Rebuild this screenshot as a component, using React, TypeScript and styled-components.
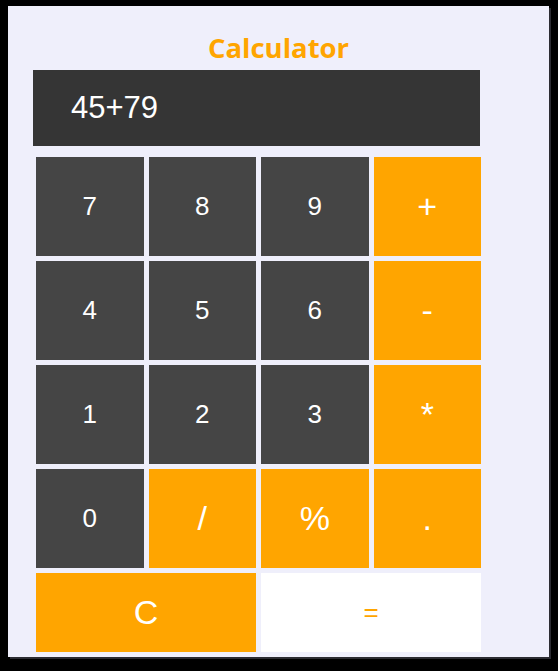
import React, {useState} from "react";
import styled, {createGlobalStyle} from "styled-components";

type Variant = "dark" | "orange" | "white";

interface Key {
  label: string;
  variant: Variant;
  big?: boolean;
  wide?: boolean;
}

const KEYS: Key[] = [
  {label: "7", variant: "dark"},
  {label: "8", variant: "dark"},
  {label: "9", variant: "dark"},
  {label: "+", variant: "orange", big: true},
  {label: "4", variant: "dark"},
  {label: "5", variant: "dark"},
  {label: "6", variant: "dark"},
  {label: "-", variant: "orange", big: true},
  {label: "1", variant: "dark"},
  {label: "2", variant: "dark"},
  {label: "3", variant: "dark"},
  {label: "*", variant: "orange", big: true},
  {label: "0", variant: "dark"},
  {label: "/", variant: "orange", big: true},
  {label: "%", variant: "orange", big: true},
  {label: ".", variant: "orange", big: true},
  {label: "C", variant: "orange", big: true, wide: true},
  {label: "=", variant: "white", wide: true},
];

const COLORS: Record<Variant, { bg: string; fg: string }> = {
  dark: {bg: "#454545", fg: "#ffffff"},
  orange: {bg: "#ffa500", fg: "#ffffff"},
  white: {bg: "#ffffff", fg: "#ffa500"},
};

export default function App() {
  const [value, setValue] = useState("45+79");

  const press = (label: string) => {
    if (label === "C") return setValue("");
    if (label === "=") {
      try {
        // eslint-disable-next-line no-new-func
        setValue(String(Function(`return (${value})`)()));
      } catch {
        setValue("Error");
      }
      return;
    }
    setValue(v => v + label);
  };

  return (
    <>
      <GlobalStyle/>
      <S.Wrapper>
        <S.Title>Calculator</S.Title>
        <S.Body>
          <S.Display>{value}</S.Display>
          <S.Keys>
            {KEYS.map(k => (
              <S.Button key={k.label} $variant={k.variant} $big={k.big} $wide={k.wide}
                        onClick={() => press(k.label)}>
                {k.label}
              </S.Button>
            ))}
          </S.Keys>
        </S.Body>
      </S.Wrapper>
    </>
  );
}

const GlobalStyle = createGlobalStyle`
  html, body {
    margin: 0;
    background: #000000;
  }
  body {
    padding: 6px 0 0 8px;
    min-height: 671px;
    box-sizing: border-box;
  }
`;

const S = {
  Wrapper: styled.div`
    display: flex;
    flex-direction: column;
    width: 541px;
    height: 651px;
    background: #efeffb;
    box-shadow: 2px 2px 0 #2c2c32;
  `,
  Title: styled.h1`
    margin: 27px 0 0;
    font-family: "Open Sans", "Liberation Sans", sans-serif;
    font-weight: 700;
    font-size: 27.5px;
    line-height: 30px;
    text-align: center;
    color: #ffa500;
  `,
  Body: styled.div`
    display: flex;
    flex-direction: column;
    padding-left: 25px;
    margin-top: 7px;
  `,
  Display: styled.div`
    display: flex;
    align-items: center;
    width: 447px;
    height: 76px;
    padding-left: 38px;
    box-sizing: border-box;
    background: #353535;
    color: #ffffff;
    font-family: "Liberation Sans", Arial, sans-serif;
    font-size: 31px;
  `,
  Keys: styled.div`
    display: grid;
    grid-template-columns: repeat(4, 1fr);
    grid-template-rows: repeat(4, 99px) 79px;
    gap: 5px;
    width: 445px;
    margin: 11px 0 0 3px;
  `,
  Button: styled.button<{ $variant: Variant; $big?: boolean; $wide?: boolean }>`
    display: flex;
    align-items: center;
    justify-content: center;
    grid-column: span ${({$wide}) => ($wide ? 2 : 1)};
    padding: 0;
    border: none;
    background: ${({$variant}) => COLORS[$variant].bg};
    color: ${({$variant}) => COLORS[$variant].fg};
    font-family: "Liberation Sans", Arial, sans-serif;
    font-size: ${({$big}) => ($big ? "34px" : "26px")};
    cursor: pointer;

    &:hover {
      filter: brightness(1.08);
    }
  `,
};
